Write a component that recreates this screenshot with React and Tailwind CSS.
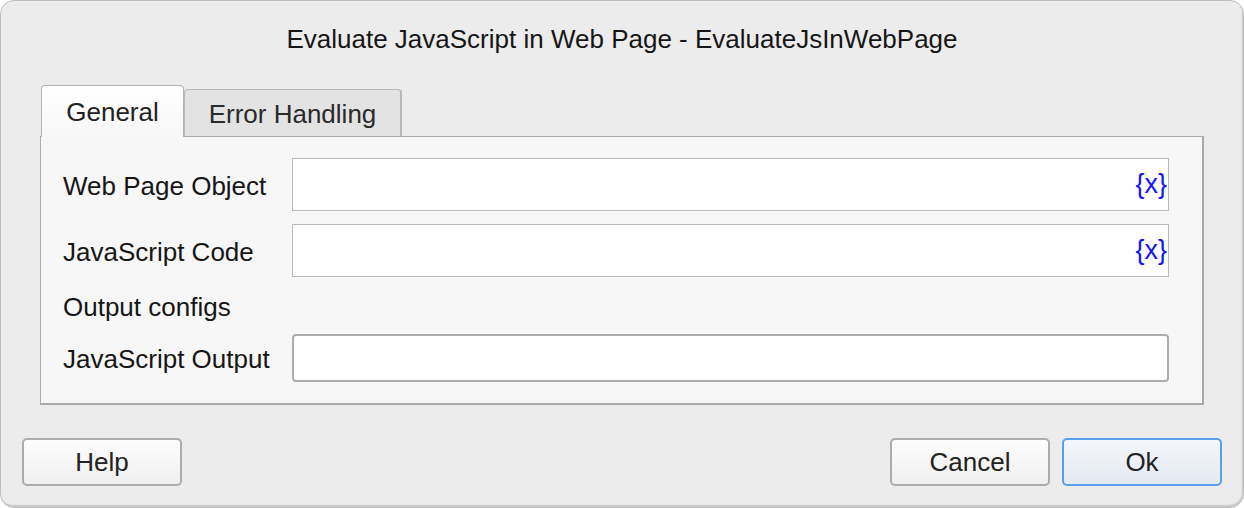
const font = { fontFamily: '"Liberation Sans", Arial, sans-serif' };

function VarField() {
  return (
    <div className="flex h-[53px] flex-1 items-center justify-end border border-[#b9b9b9] bg-white pr-[1px]">
      <span className="text-[27px] leading-none text-[#1414f5]">{'{x}'}</span>
    </div>
  );
}

function Row({ label, children }) {
  return (
    <div className="flex items-center">
      <div className="w-[229px] shrink-0 pt-[3px] text-[26px] text-[#161616]">{label}</div>
      {children}
    </div>
  );
}

function Btn({ children, primary }) {
  return (
    <button
      className={
        'h-[48px] w-[160px] rounded-[5px] border-2 bg-gradient-to-b pt-[1px] text-[26px] text-[#222] ' +
        (primary
          ? 'border-[#5b9ee9] from-[#f4f7fb] to-[#e4e9f1]'
          : 'border-[#acacac] from-[#fdfdfd] to-[#f0f0f0]')
      }
    >
      {children}
    </button>
  );
}

export default function App() {
  return (
    <div className="h-[508px] w-[1244px] bg-white" style={font}>
      <div className="flex h-full w-full flex-col rounded-[14px] border border-[#bdbdbd] bg-[#ececec] shadow-[inset_-1px_-2px_1px_rgba(0,0,0,0.15)]">
        <div className="pt-[19px] text-center text-[26px] leading-[39px] text-[#161616]">
          Evaluate JavaScript in Web Page - EvaluateJsInWebPage
        </div>

        <div className="mt-[26px] px-[39px]">
          {/* tabs */}
          <div className="flex items-end pl-[1px]">
            <div className="relative z-10 -mb-px flex h-[52px] w-[143px] items-center justify-center rounded-t-[4px] border border-b-0 border-[#b3b3b3] bg-gradient-to-b from-white to-[#f7f7f7] pt-[2px] text-[26px] text-[#222]">
              General
            </div>
            <div className="flex h-[47px] w-[218px] items-center justify-center rounded-t-[4px] border border-b-0 border-r-2 border-[#b8b8b8] bg-[#e3e3e3] pt-[2px] text-[26px] text-[#2a2a2a]">
              Error Handling
            </div>
          </div>

          {/* panel */}
          <div className="flex h-[269px] flex-col border-t border-l border-[#acacac] border-r-2 border-b-2 border-r-[#a8a8a8] border-b-[#a8a8a8] bg-[#f7f7f7] pl-[22px] pr-[33px] pt-[21px]">
            <Row label="Web Page Object">
              <VarField />
            </Row>
            <div className="mt-[13px]">
              <Row label="JavaScript Code">
                <VarField />
              </Row>
            </div>
            <div className="mt-[12px] text-[26px] leading-[36px] text-[#161616]">Output configs</div>
            <div className="mt-[9px]">
              <Row label="JavaScript Output">
                <div className="h-[48px] flex-1 rounded-[4px] border-2 border-[#acacac] bg-white" />
              </Row>
            </div>
          </div>
        </div>

        <div className="mt-[33px] flex items-center px-[21px]">
          <Btn>Help</Btn>
          <div className="flex-1" />
          <Btn>Cancel</Btn>
          <div className="w-[12px]" />
          <Btn primary>Ok</Btn>
        </div>
      </div>
    </div>
  );
}
